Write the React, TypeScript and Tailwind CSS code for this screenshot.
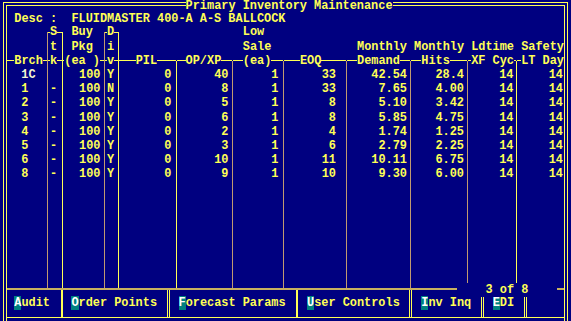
import type { ReactNode } from "react";

const data = [
  ["1C", " ", "100", "Y", "0", "40", "1", "33", "42.54", "28.4", "14", "14"],
  ["1", "-", "100", "N", "0", "8", "1", "33", "7.65", "4.00", "14", "14"],
  ["2", "-", "100", "Y", "0", "5", "1", "8", "5.10", "3.42", "14", "14"],
  ["3", "-", "100", "Y", "0", "6", "1", "8", "5.85", "4.75", "14", "14"],
  ["4", "-", "100", "Y", "0", "2", "1", "4", "1.74", "1.25", "14", "14"],
  ["5", "-", "100", "Y", "0", "3", "1", "6", "2.79", "2.25", "14", "14"],
  ["6", "-", "100", "Y", "0", "10", "1", "11", "10.11", "6.75", "14", "14"],
  ["8", "-", "100", "Y", "0", "9", "1", "10", "9.30", "6.00", "14", "14"],
];

function Txt({ children, className = "" }: { children?: ReactNode; className?: string }) {
  return <div className={`h-[14.2px] whitespace-pre leading-[14.2px] ${className}`}>{children ?? " "}</div>;
}

// vertical box line, starting at row 2 centre or row 4 centre
function VLine({ tall, olive }: { tall?: boolean; olive?: boolean }) {
  return (
    <div className="flex w-px flex-col">
      <div className={tall ? "h-[35.5px]" : "h-[7.1px]"} />
      <div className={`flex-1 ${olive ? "bg-[#c09a70]" : "bg-[#ffff55]"}`} />
    </div>
  );
}

// ┌X┐
function Corner({ ch }: { ch: string }) {
  return (
    <div className="flex h-[14.2px] items-center">
      <div className="h-px w-[2px] bg-[#ffff55]" />
      <span className="leading-[14.2px]">{ch}</span>
      <div className="h-px flex-1 bg-[#ffff55]" />
    </div>
  );
}

// ──label──
function OnLine({ lead, text }: { lead: string; text: string }) {
  return (
    <div className="flex h-[14.2px] items-center">
      <div className={`h-px bg-[#ffff55] ${lead}`} />
      <span className="whitespace-pre leading-[14.2px]">{text}</span>
      <div className="h-px flex-1 bg-[#ffff55]" />
    </div>
  );
}

function Col({
  w,
  idx,
  cell,
  r2,
  r3,
  head,
  line,
}: {
  w: string;
  idx: number;
  cell: string;
  r2?: ReactNode;
  r3?: ReactNode;
  head: ReactNode;
  line?: ReactNode;
}) {
  return (
    <div className={`flex ${w}`}>
      <div className="flex min-w-0 flex-1 flex-col">
        {r2 ?? <Txt />}
        {r3 ?? <Txt />}
        {head}
        {data.map((r, i) => (
          <Txt key={i} className={idx === 0 && i === 0 ? `${cell} text-[#f4f4d0]` : cell}>
            {r[idx]}
          </Txt>
        ))}
      </div>
      {line}
    </div>
  );
}

function Btn({ cls, k, rest }: { cls: string; k: string; rest: string }) {
  return (
    <div className={`whitespace-pre border-[#ffff55] pt-[6px] leading-[14.2px] ${cls}`}>
      <span className="inline-block bg-[#008080] text-white">{k}</span>
      {rest}
    </div>
  );
}

export default function App() {
  return (
    <div className="h-[321px] w-[571px] overflow-hidden bg-[#000080] font-['Liberation_Mono','DejaVu_Sans_Mono',monospace] text-[11.9px] font-bold text-[#ffff55]">
      <div className="mx-[3px] mt-[2px] border-x-4 border-t-4 border-double border-[#ffff55]">
        <div className="flex h-[5.2px] items-start">
          <div className="-mt-[6px] ml-[178.6px] h-[12px] bg-[#000080] leading-[12px]">
            Primary Inventory Maintenance
          </div>
        </div>

        <Txt className="pl-[7.3px] pt-[1px]">Desc :  FLUIDMASTER 400-A A-S BALLCOCK</Txt>

        <div className="flex h-[262.7px]">
          <Col w="w-[41px]" idx={0} cell="pl-[14.3px]" head={<OnLine lead="w-[7.3px]" text="Brch" />} line={<VLine olive />} />
          <Col
            w="w-[15px]"
            idx={1}
            cell="pl-[2px]"
            r2={<Corner ch="S" />}
            r3={<Txt className="pl-[2px]">t</Txt>}
            head={<OnLine lead="w-[2px]" text="k" />}
            line={<VLine />}
          />
          <Col
            w="w-[42px]"
            idx={2}
            cell="pr-[3.5px] text-right"
            r2={<Txt className="pl-[8.4px]">Buy</Txt>}
            r3={<Txt className="pl-[8.4px]">Pkg</Txt>}
            head={<OnLine lead="w-[1.3px]" text="(ea )" />}
            line={<VLine olive />}
          />
          <Col
            w="w-[14px]"
            idx={3}
            cell="pl-[2.1px]"
            r2={<Corner ch="D" />}
            r3={<Txt className="pl-[2.1px]">i</Txt>}
            head={<OnLine lead="w-[2.1px]" text="v" />}
            line={<VLine />}
          />
          <Col w="w-[58px]" idx={4} cell="pr-[4.5px] text-right" head={<OnLine lead="w-[16.7px]" text="PIL" />} line={<VLine tall />} />
          <Col w="w-[56px]" idx={5} cell="pr-[3.5px] text-right" head={<OnLine lead="w-[8.6px]" text="OP/XP" />} line={<VLine tall olive />} />
          <Col
            w="w-[51px]"
            idx={6}
            cell="pr-[4.5px] text-right"
            r2={<Txt className="pl-[9.8px]">Low</Txt>}
            r3={<Txt className="pl-[9.8px]">Sale</Txt>}
            head={<OnLine lead="w-[9.8px]" text="(ea)" />}
            line={<VLine tall olive />}
          />
          <Col w="w-[63px]" idx={7} cell="pr-[10px] text-right" head={<OnLine lead="w-[15.9px]" text="EOQ" />} line={<VLine tall olive />} />
          <Col
            w="w-[64px]"
            idx={8}
            cell="pr-[3px] text-right"
            r3={<Txt className="pl-[10px]">Monthly</Txt>}
            head={<OnLine lead="w-[10px]" text="Demand" />}
            line={<VLine tall olive />}
          />
          <Col
            w="w-[57px]"
            idx={9}
            cell="pr-[3px] text-right"
            r3={<Txt className="pl-[3.1px]">Monthly</Txt>}
            head={<OnLine lead="w-[10.3px]" text="Hits" />}
            line={<VLine tall olive />}
          />
          <Col
            w="w-[49px]"
            idx={10}
            cell="pr-[2.5px] text-right"
            r3={<Txt className="pl-[3.2px]">Ldtime</Txt>}
            head={<OnLine lead="w-[3.2px]" text="XF Cyc" />}
            line={<VLine tall />}
          />
          <Col
            w="flex-1"
            idx={11}
            cell="pr-[1px] text-right"
            r3={<Txt className="pl-[4.2px]">Safety</Txt>}
            head={<OnLine lead="w-[4.2px]" text="LT Day" />}
          />
        </div>

        <div className="flex h-[2px]">
          <div className="w-[450px] bg-[#c8b060]" />
          <div className="w-[100px]">
            <div className="relative z-10 -mt-[5px] h-[14.2px] whitespace-pre bg-[#000080] pl-[28.5px] leading-[14.2px]">
              3 of 8
            </div>
          </div>
          <div className="flex-1 bg-[#c8b060]" />
        </div>

        <div className="flex h-[28px] border-b border-[#ffff55]">
          <Btn cls="w-[55px] border-r pl-[7.3px]" k="A" rest="udit" />
          <Btn cls="w-[106px] border-x pl-[8.4px]" k="O" rest="rder Points" />
          <Btn cls="ml-px w-[128px] border-x pl-[8.5px]" k="F" rest="orecast Params" />
          <Btn cls="w-[113px] border-x pl-[9px]" k="U" rest="ser Controls" />
          <Btn cls="ml-px w-[71px] border-x pl-[9.3px]" k="I" rest="nv Inq" />
          <Btn cls="ml-px w-[42px] border-x pl-[8.7px]" k="E" rest="DI" />
          <div className="ml-px flex-1 border-l border-[#ffff55]" />
        </div>
        <div className="h-[20px]" />
      </div>
    </div>
  );
}
